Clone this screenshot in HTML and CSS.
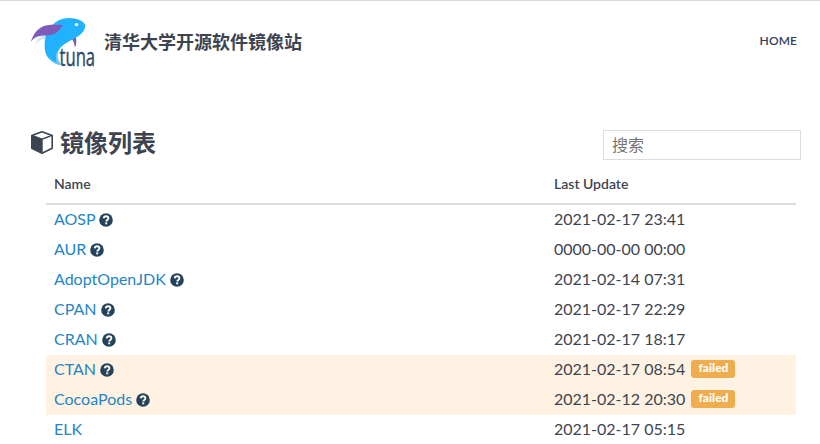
FILE: index.html
```html
<!DOCTYPE html>
<html lang="zh-CN">
<head>
<meta charset="utf-8">
<title>清华大学开源软件镜像站</title>
<link rel="stylesheet" href="styles.css">
</head>
<body>
<svg class="defs" width="0" height="0" aria-hidden="true">
  <symbol id="help" viewBox="0 0 14 14">
    <circle cx="7" cy="7" r="6.8" fill="currentColor"/>
    <path d="M4.7 5.4C4.9 3.9 5.8 3.3 7 3.3c1.4 0 2.4.8 2.4 2 0 1.6-2.1 1.7-2.1 3.1" fill="none" stroke="var(--mark, #fff)" stroke-width="1.9"/>
    <path d="M6.2 9.4h2v1.9h-2z" fill="var(--mark, #fff)"/>
  </symbol>
</svg>
<header class="navbar">
  <a class="brand" href="#">
    <svg class="logo" viewBox="0 0 66 50">
      <path d="M5 27C8 21 12 17 19 17L17 22C12 22 9 23 5 27Z" fill="#c9e8f1"/>
      <path d="M42 22L46 20.300C46.500 25 46.500 28 44.800 30.500C44.500 27 43.800 24.500 42 22Z" fill="#7e57b5"/>
      <path d="M20 11C24 5 31 1 39 1C47 1 54 4 55 8C56 12 52 17 47 20C41 23.500 35 26 31 30C27 34 25 43 33 48.800C21 47 15 39 14.700 31C14.500 24 15 17 20 11Z" fill="#22b1fc"/>
      <path d="M28 32.500C26.500 38 27 44 33 48.800C26 48 20 43 19 39C22 43 24 44.500 27 46C25 41 26 36 28 32.500Z" fill="#a5dcf3" opacity=".6"/>
      <path d="M.8 24.800C4 15 10 8 21 7.800C25 7.700 29 7.800 32.700 8C29 15 24 18.500 16 18.500C9 18.500 4 20 .8 24.800Z" fill="#805ab8"/>
      <circle cx="46.500" cy="7.600" r="1.700" fill="#fff"/>
      <text class="logo-text" transform="translate(29.500 48.500) scale(.75 1)" textLength="47.500" lengthAdjust="spacingAndGlyphs">tuna</text>
    </svg>
    <span class="brand-name">清华大学开源软件镜像站</span>
  </a>
  <nav><a class="nav-link" href="#">HOME</a></nav>
</header>
<main>
  <div class="heading">
    <h2 class="title">
      <svg class="cube" viewBox="0 0 24 24">
        <path d="M12 1.700L22.200 5.400V18.200L12 23.200L1.800 18.200V5.400Z" fill="none" stroke="currentColor" stroke-width="1.600" stroke-linejoin="round"/>
        <path d="M2 5.400L12 9.200V23L2 18.200Z" fill="currentColor"/>
        <path d="M2 5.400L12 9.200L22 5.400M12 9.200V22" fill="none" stroke="currentColor" stroke-width="1.400"/>
      </svg>
      <span>镜像列表</span>
    </h2>
    <input class="search" type="text" placeholder="搜索">
  </div>
  <table class="mirrors">
    <thead><tr><th class="name">Name</th><th>Last Update</th></tr></thead>
    <tbody>
      <tr><td><a href="#">AOSP</a> <svg class="help"><use href="#help"/></svg></td><td>2021-02-17 23:41</td></tr>
      <tr><td><a href="#">AUR</a> <svg class="help"><use href="#help"/></svg></td><td>0000-00-00 00:00</td></tr>
      <tr><td><a href="#">AdoptOpenJDK</a> <svg class="help"><use href="#help"/></svg></td><td>2021-02-14 07:31</td></tr>
      <tr><td><a href="#">CPAN</a> <svg class="help"><use href="#help"/></svg></td><td>2021-02-17 22:29</td></tr>
      <tr><td><a href="#">CRAN</a> <svg class="help"><use href="#help"/></svg></td><td>2021-02-17 18:17</td></tr>
      <tr class="warning"><td><a href="#">CTAN</a> <svg class="help"><use href="#help"/></svg></td><td>2021-02-17 08:54 <span class="label">failed</span></td></tr>
      <tr class="warning"><td><a href="#">CocoaPods</a> <svg class="help"><use href="#help"/></svg></td><td>2021-02-12 20:30 <span class="label">failed</span></td></tr>
      <tr><td><a href="#">ELK</a></td><td>2021-02-17 05:15</td></tr>
    </tbody>
  </table>
</main>
</body>
</html>
```
FILE: styles.css
```css
* { box-sizing: border-box; }
html { height: 444px; overflow: hidden; }
body {
  margin: 0;
  height: 444px;
  overflow: hidden;
  border-top: 1px solid #d9d9dc;
  background: #fff;
  color: #3d4450;
  font: 16px/20px Lato, "Noto Sans CJK SC", sans-serif;
}
a { color: #2585c4; text-decoration: none; }
.defs { display: block; }
.navbar {
  display: flex;
  justify-content: space-between;
  align-items: center;
  height: 82px;
  padding: 0 23px 0 30px;
}
.brand { display: flex; align-items: center; gap: 8px; color: #3d4450; }
.logo { width: 66px; height: 50px; overflow: visible; }
.logo-text { font: 500 25px "Open Sans", sans-serif; fill: #2e4a68; stroke: #2e4a68; stroke-width: .4px; }
.brand-name { padding-bottom: 1px; font-size: 18px; font-weight: 700; line-height: 24px; }
.nav-link { display: block; padding-bottom: 2px; color: #2f3f55; font-size: 12px; font-weight: 600; letter-spacing: .1px; }
main { padding: 46px 19px 0 30px; }
.heading { display: flex; justify-content: space-between; height: 34px; }
.title {
  display: flex;
  align-items: center;
  gap: 6px;
  height: 26px;
  margin: 0;
  font-size: 24px;
  line-height: 26px;
}
.title span { padding-top: 1px; }
.cube { width: 24px; height: 24px; }
.search {
  width: 198px;
  height: 30px;
  margin: 1px 0 0;
  padding: 0 8px 2px;
  border: 1px solid #ddd;
  font: 16px Lato, "Noto Sans CJK SC", sans-serif;
}
.search::placeholder { color: #757575; }
.mirrors {
  width: 750px;
  margin: 0 0 0 16px;
  border-collapse: separate;
  border-spacing: 0;
  table-layout: fixed;
}
th {
  height: 42px;
  padding: 2px 8px 0;
  border-bottom: 2px solid #ddd;
  text-align: left;
  font-size: 14px;
  font-weight: 600;
}
.name { width: 500px; }
td { height: 30px; padding: 0 8px 2px; white-space: nowrap; line-height: 20px; }
.help { width: 14px; height: 14px; vertical-align: -2px; color: #23435c; }
.warning { background: #fff2e2; --mark: #fff2e2; }
.label {
  display: inline-block;
  width: 44px;
  height: 18px;
  margin: -3px 0 -3px 2px;
  border-radius: 3px;
  background: #f0ad4e;
  color: #fff;
  font-size: 12px;
  font-weight: 900;
  line-height: 16px;
  text-align: center;
  vertical-align: 3px;
}
```
